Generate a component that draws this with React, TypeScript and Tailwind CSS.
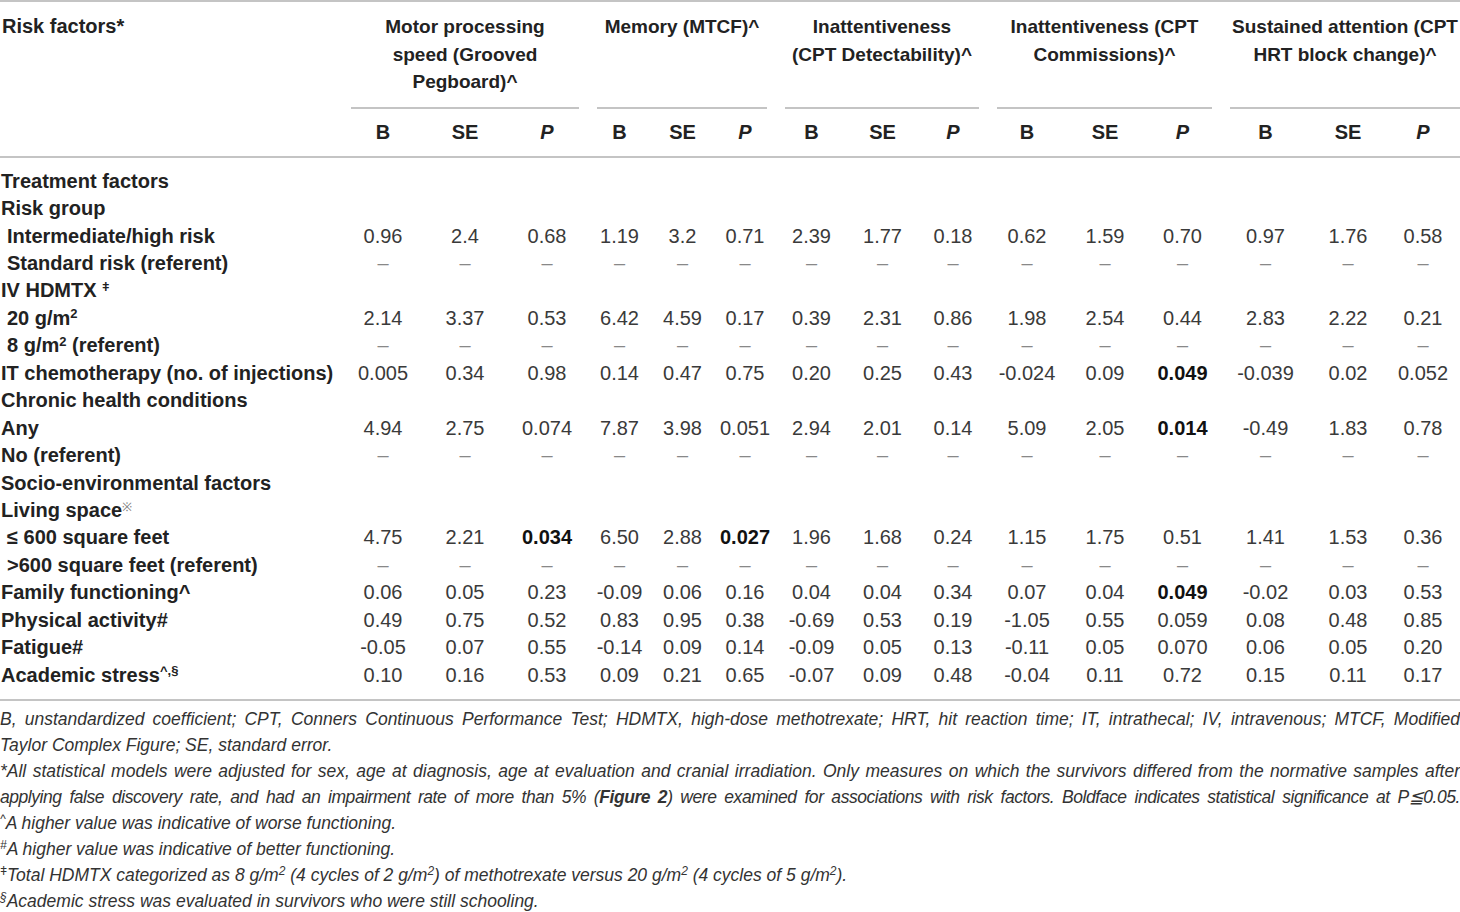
import React from 'react';

const grid =
  'grid grid-cols-[342px_82px_82px_82px_63px_63px_62px_71px_71px_70px_78px_78px_77px_89px_76px_74px]';

type Row = {
  label: React.ReactNode;
  indent?: boolean;
  values?: string[];
};

const dash = Array(15).fill('–');

const rows: Row[] = [
  { label: 'Treatment factors' },
  { label: 'Risk group' },
  {
    label: 'Intermediate/high risk',
    indent: true,
    values: ['0.96', '2.4', '0.68', '1.19', '3.2', '0.71', '2.39', '1.77', '0.18', '0.62', '1.59', '0.70', '0.97', '1.76', '0.58'],
  },
  { label: 'Standard risk (referent)', indent: true, values: dash },
  {
    label: (
      <>
        IV HDMTX <sup className="text-[12px]">ǂ</sup>
      </>
    ),
  },
  {
    label: (
      <>
        20 g/m<sup className="text-[13px]">2</sup>
      </>
    ),
    indent: true,
    values: ['2.14', '3.37', '0.53', '6.42', '4.59', '0.17', '0.39', '2.31', '0.86', '1.98', '2.54', '0.44', '2.83', '2.22', '0.21'],
  },
  {
    label: (
      <>
        8 g/m<sup className="text-[13px]">2</sup> (referent)
      </>
    ),
    indent: true,
    values: dash,
  },
  {
    label: 'IT chemotherapy (no. of injections)',
    values: ['0.005', '0.34', '0.98', '0.14', '0.47', '0.75', '0.20', '0.25', '0.43', '-0.024', '0.09', '*0.049', '-0.039', '0.02', '0.052'],
  },
  { label: 'Chronic health conditions' },
  {
    label: 'Any',
    values: ['4.94', '2.75', '0.074', '7.87', '3.98', '0.051', '2.94', '2.01', '0.14', '5.09', '2.05', '*0.014', '-0.49', '1.83', '0.78'],
  },
  { label: 'No (referent)', values: dash },
  { label: 'Socio-environmental factors' },
  {
    label: (
      <>
        Living space<sup className="text-[12px] font-normal text-[#777]">※</sup>
      </>
    ),
  },
  {
    label: '≤ 600 square feet',
    indent: true,
    values: ['4.75', '2.21', '*0.034', '6.50', '2.88', '*0.027', '1.96', '1.68', '0.24', '1.15', '1.75', '0.51', '1.41', '1.53', '0.36'],
  },
  { label: '>600 square feet (referent)', indent: true, values: dash },
  {
    label: 'Family functioning^',
    values: ['0.06', '0.05', '0.23', '-0.09', '0.06', '0.16', '0.04', '0.04', '0.34', '0.07', '0.04', '*0.049', '-0.02', '0.03', '0.53'],
  },
  {
    label: 'Physical activity#',
    values: ['0.49', '0.75', '0.52', '0.83', '0.95', '0.38', '-0.69', '0.53', '0.19', '-1.05', '0.55', '0.059', '0.08', '0.48', '0.85'],
  },
  {
    label: 'Fatigue#',
    values: ['-0.05', '0.07', '0.55', '-0.14', '0.09', '0.14', '-0.09', '0.05', '0.13', '-0.11', '0.05', '0.070', '0.06', '0.05', '0.20'],
  },
  {
    label: (
      <>
        Academic stress<sup className="text-[13px]">^,§</sup>
      </>
    ),
    values: ['0.10', '0.16', '0.53', '0.09', '0.21', '0.65', '-0.07', '0.09', '0.48', '-0.04', '0.11', '0.72', '0.15', '0.11', '0.17'],
  },
];

const groups: { lines: string[]; last?: boolean }[] = [
  { lines: ['Motor processing', 'speed (Grooved', 'Pegboard)^'] },
  { lines: ['Memory (MTCF)^'] },
  { lines: ['Inattentiveness', '(CPT Detectability)^'] },
  { lines: ['Inattentiveness (CPT', 'Commissions)^'] },
  { lines: ['Sustained attention (CPT', 'HRT block change)^'], last: true },
];

function Cell({ v }: { v: string }) {
  const bold = v.startsWith('*');
  const text = bold ? v.slice(1) : v;
  return (
    <div
      className={`whitespace-nowrap text-center ${
        bold ? 'font-bold text-[#111]' : text === '–' ? 'text-[#888]' : 'text-[#3a3a3a]'
      }`}
    >
      {text}
    </div>
  );
}

function Line({ children, last, tight }: { children: React.ReactNode; last?: boolean; tight?: boolean }) {
  return (
    <span
      className={`block whitespace-nowrap text-justify ${last ? '' : '[text-align-last:justify]'} ${
        tight ? 'tracking-[-0.45px]' : ''
      }`}
    >
      {children}
    </span>
  );
}

export default function App() {
  return (
    <div className="h-[912px] w-[1460px] overflow-hidden bg-white font-['Liberation_Sans',Arial,sans-serif] text-[20px] text-[#222]">
      {/* group header row */}
      <div className={`${grid} border-t-2 border-[#c4c4c4] pt-[11px] text-[19px] leading-[27.5px] font-bold text-[#222]`}>
        <div className="pl-[2px] text-[20px]">Risk factors*</div>
        {groups.map((g, i) => (
          <div key={i} className={`col-span-3 ${g.last ? 'pl-[9px]' : 'px-[9px]'}`}>
            <div className="flex h-full flex-col items-center border-b-2 border-[#c4c4c4] pb-[11px]">
              {g.lines.map((l, j) => (
                <div key={j} className="whitespace-nowrap">
                  {l}
                </div>
              ))}
            </div>
          </div>
        ))}
      </div>

      {/* sub header */}
      <div className={`${grid} h-[49px] items-center border-b-2 border-[#c4c4c4] font-bold text-[#222]`}>
        <div />
        {Array.from({ length: 5 }).map((_, i) => (
          <React.Fragment key={i}>
            <div className="text-center">B</div>
            <div className="text-center">SE</div>
            <div className="text-center italic">P</div>
          </React.Fragment>
        ))}
      </div>

      {/* body */}
      <div className="border-b-2 border-[#c4c4c4] pt-[10px] pb-[10px]">
        {rows.map((r, i) => (
          <div key={i} className={`${grid} h-[27.45px] items-center leading-[27px]`}>
            <div className={`whitespace-nowrap font-bold text-[#222] ${r.indent ? 'pl-[7px]' : 'pl-[1px]'}`}>{r.label}</div>
            {r.values?.map((v, j) => <Cell key={j} v={v} />)}
          </div>
        ))}
      </div>

      {/* footnotes */}
      <div className="mt-[5px] text-[17.5px] italic leading-[26px] text-[#333]">
        <p>
          <Line>
            B, unstandardized coefficient; CPT, Conners Continuous Performance Test; HDMTX, high-dose methotrexate; HRT, hit reaction time; IT, intrathecal; IV, intravenous; MTCF, Modified
          </Line>
          <Line last>Taylor Complex Figure; SE, standard error.</Line>
        </p>
        <p>
          <Line>
            *All statistical models were adjusted for sex, age at diagnosis, age at evaluation and cranial irradiation. Only measures on which the survivors differed from the normative samples after
          </Line>
          <Line tight>
            applying false discovery rate, and had an impairment rate of more than 5% (<b>Figure 2</b>) were examined for associations with risk factors. Boldface indicates statistical significance at P≦0.05.
          </Line>
        </p>
        <p>
          <sup className="text-[12px]">^</sup>A higher value was indicative of worse functioning.
        </p>
        <p>
          <sup className="text-[12px]">#</sup>A higher value was indicative of better functioning.
        </p>
        <p>
          <sup className="text-[12px]">ǂ</sup>Total HDMTX categorized as 8 g/m<sup className="text-[12px]">2</sup> (4 cycles of 2 g/m
          <sup className="text-[12px]">2</sup>) of methotrexate versus 20 g/m<sup className="text-[12px]">2</sup> (4 cycles of 5 g/m
          <sup className="text-[12px]">2</sup>).
        </p>
        <p>
          <sup className="text-[12px]">§</sup>Academic stress was evaluated in survivors who were still schooling.
        </p>
      </div>
    </div>
  );
}
